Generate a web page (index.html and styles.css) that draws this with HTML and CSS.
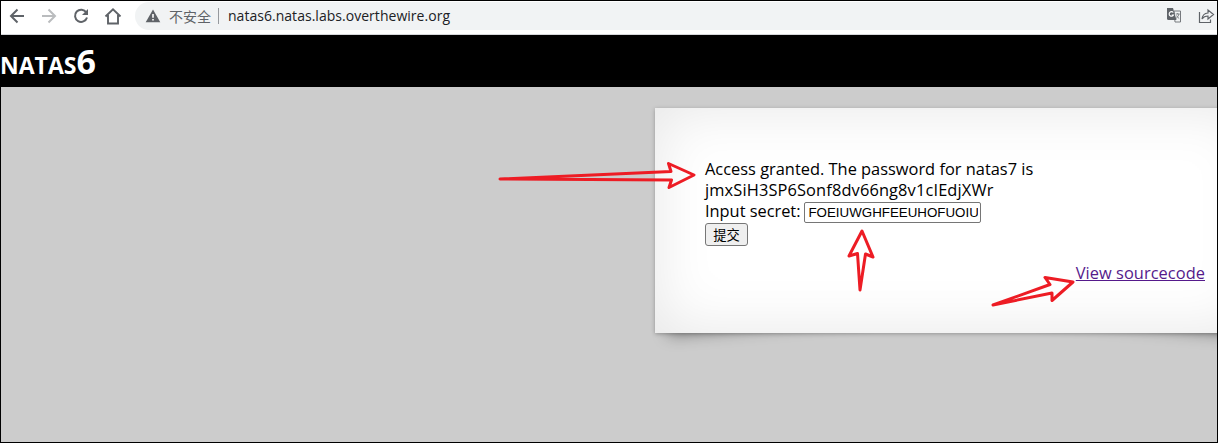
FILE: index.html
```html
<!DOCTYPE html>
<html lang="zh-CN">
<head>
<meta charset="utf-8">
<title>natas6</title>
<link rel="stylesheet" href="styles.css">
</head>
<body>
<div class="window">
  <div class="toolbar">
    <svg class="nav" viewBox="0 0 134 32" fill="none" stroke="#5f6368" stroke-width="2">
      <path d="M23 14H10.500M16.500 7.500L10 14l6.500 6.500"/>
      <path d="M41 14h12.500M47.500 7.500L54 14l-6.500 6.500" stroke="#babcbe"/>
      <path d="M85.300 10.500A6.100 6.100 0 1 0 86 15.500"/>
      <path d="M87 7v6h-6z" fill="#5f6368" stroke="none"/>
      <path d="M104.500 14.500L112 7.300l7.500 7.200M107 13v8.500h10V13" stroke-width="1.900"/>
    </svg>
    <div class="omnibox">
      <svg class="warn" viewBox="0 0 16 14"><path d="M8 .5L15.300 13.300H.7z" fill="#5f6368"/><path d="M7.200 5h1.600v3.700H7.200zM7.200 10h1.600v1.600H7.200z" fill="#fff"/></svg>
      <span class="insecure">不安全</span>
      <span class="divider"></span>
      <span class="url">natas6.natas.labs.overthewire.org</span>
      <svg class="actions" viewBox="0 0 50 18">
        <path d="M8 4h6.500v11H9z" fill="#f1f3f4" stroke="#777a7e"/>
        <path d="M1 1h6l3.500 12H2.500Q1 13 1 11.500z" fill="#5f6368"/>
        <path d="M7.300 5.500A2.300 2.300 0 1 0 7.500 8H5.700" fill="none" stroke="#fff" stroke-width="1.100"/>
        <path d="M9.700 7h4M11.700 6v1M13 7q-.7 3-3 4.500M10.500 8.500q1 2 2.700 3" fill="none" stroke="#777a7e" stroke-width=".9"/>
        <path d="M33.500 5v10.500h11v-3" fill="none" stroke="#5f6368" stroke-width="1.200"/>
        <path d="M36 12q.5-5.500 6-6V3L47.500 7.500 42 12V9q-4 0-6 3z" fill="none" stroke="#5f6368" stroke-width="1.200"/>
      </svg>
    </div>
  </div>
  <h1 class="title">natas<span class="level">6</span></h1>
  <div class="page">
    <div class="content">
      <div class="line granted">Access granted. The password for natas7 is</div>
      <div class="line password">jmxSiH3SP6Sonf8dv66ng8v1cIEdjXWr</div>
      <form class="secret-form">
        <div class="line field"><label class="label" for="secret">Input secret:</label><input class="secret" id="secret" value="FOEIUWGHFEEUHOFUOIU"></div>
        <button class="submit" type="button">提交</button>
      </form>
      <div class="source"><a class="link" href="#">View sourcecode</a></div>
    </div>
  </div>
  <svg class="marks" viewBox="0 0 1218 443">
    <path d="M500 179L671 171.500 668.500 163.500 694 175 669 187.500 671.500 180z"/>
    <path d="M860 290L857.500 253.500 849 256 862 231 873 257 865.500 254z"/>
    <path d="M993 305L1050 284.500 1045 277.500 1073 282 1052 300.500 1052 293z"/>
  </svg>
</div>
</body>
</html>
```
FILE: styles.css
```css
* { box-sizing: border-box; }
body { margin: 0; font-family: "Open Sans", "Noto Sans CJK SC", sans-serif; color: #000; }
.window { position: relative; width: 1218px; height: 443px; overflow: hidden; border: 1px solid #000; background: #ccc; }
.toolbar { display: flex; height: 34px; background: #fff; border-bottom: 1px solid #d5d7da; padding-top: 1px; }
.nav { flex: none; width: 134px; height: 32px; }
.omnibox { flex: 1; height: 28px; display: flex; align-items: center; background: #f1f3f4; border-radius: 14px 0 0 14px; padding-left: 10px; font-size: 14px; }
.warn { width: 16px; height: 14px; }
.insecure { margin-left: 8px; color: #5f6368; font-family: "Noto Sans CJK SC", sans-serif; line-height: 20px; margin-top: -1px; }
.divider { width: 1px; height: 16px; margin: 0 9px 0 7px; background: #96999d; }
.url { color: #202124; line-height: 20px; white-space: nowrap; letter-spacing: .03px; }
.actions { width: 50px; height: 18px; margin: 0 1px 0 auto; }
.title { margin: 0 0 0 -1px; height: 52px; background: #000; color: #fff; font-size: 33px; line-height: 52px; font-variant: small-caps; font-weight: 700; letter-spacing: 0; }
.level { font-size: 34px; }
.page { position: relative; z-index: 0; padding: 21px 0 0 654px; }
.content { position: relative; width: 600px; height: 225px; padding: 51px 50px; background: #fff; box-shadow: 0 1px 4px rgba(0, 0, 0, .27), inset 0 0 60px rgba(0, 0, 0, .1); }
.content::before, .content::after { content: ""; position: absolute; z-index: -1; bottom: 14px; width: 200px; height: 100px; box-shadow: 0 8px 16px rgba(0, 0, 0, .4); }
.content::before { left: 19px; transform: skew(-10deg) rotate(-5deg); }
.content::after { right: 19px; transform: skew(10deg) rotate(5deg); }
.line { height: 21px; line-height: 19px; font-size: 16px; white-space: nowrap; }
.granted { font-size: 16.4px; }
.password { font-size: 16.4px; letter-spacing: .13px; }
.secret-form { padding-top: 1px; }
.field { display: flex; align-items: center; }
.label { margin: -4px 4px 0 0; font-size: 16.4px; letter-spacing: -.02px; }
.secret { width: 177px; height: 21px; padding: 1px 2px 1px 3px; border: 1px solid #767676; border-radius: 2px; background: #fff; font: 13.333px "Liberation Sans", sans-serif; }
.submit { display: block; width: 43px; height: 23px; padding: 0; border: 1px solid #767676; border-radius: 3px; background: #efefef; color: #000; font: 13.333px "Noto Sans CJK SC", sans-serif; line-height: 20px; }
.source { margin-top: 17px; text-align: right; font-size: 16.4px; line-height: 19px; }
.link { color: #551a8b; text-decoration: underline; letter-spacing: .05px; }
.marks { position: absolute; left: -1px; top: -1px; width: 1218px; height: 443px; fill: none; stroke: #ed1c24; stroke-width: 3; stroke-linejoin: round; }
```
